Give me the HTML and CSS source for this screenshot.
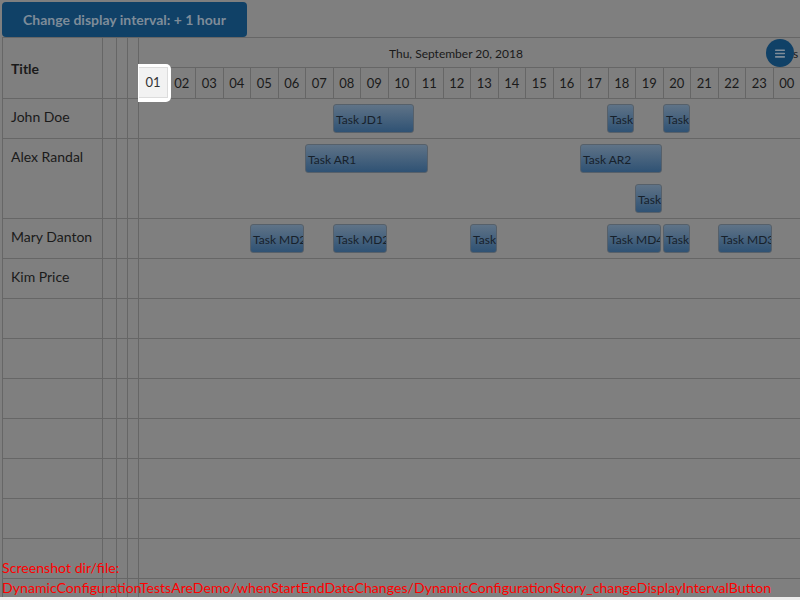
FILE: index.html
```html
<!DOCTYPE html>
<html>
<head>
<meta charset="utf-8">
<link rel="stylesheet" href="styles.css">
</head>
<body>
<button class="interval-btn">Change display interval: + 1 hour</button>
<div class="gantt">
  <div class="row header">
    <div class="cell c-title"><span class="title">Title</span></div>
    <div class="cell c-a"></div><div class="cell c-b"></div><div class="cell c-c"></div>
    <div class="tl tl-head">
      <div class="date-row"><span class="date">Thu, September 20, 2018</span><span class="date-tail">s</span></div>
      <div class="hour-row">
        <div class="hour">01</div><div class="hour">02</div><div class="hour">03</div><div class="hour">04</div>
        <div class="hour">05</div><div class="hour">06</div><div class="hour">07</div><div class="hour">08</div>
        <div class="hour">09</div><div class="hour">10</div><div class="hour">11</div><div class="hour">12</div>
        <div class="hour">13</div><div class="hour">14</div><div class="hour">15</div><div class="hour">16</div>
        <div class="hour">17</div><div class="hour">18</div><div class="hour">19</div><div class="hour">20</div>
        <div class="hour">21</div><div class="hour">22</div><div class="hour">23</div><div class="hour">00</div>
      </div>
    </div>
  </div>
  <div class="row">
    <div class="cell c-title">John Doe</div>
    <div class="cell c-a"></div><div class="cell c-b"></div><div class="cell c-c"></div>
    <div class="tl">
      <div class="bar" style="left:193.5px;width:81.5px">Task JD1</div>
      <div class="bar" style="left:467.5px;width:27px">Task</div>
      <div class="bar" style="left:523.5px;width:27px">Task</div>
    </div>
  </div>
  <div class="row tall">
    <div class="cell c-title">Alex Randal</div>
    <div class="cell c-a"></div><div class="cell c-b"></div><div class="cell c-c"></div>
    <div class="tl">
      <div class="bar" style="left:165.5px;width:123px">Task AR1</div>
      <div class="bar" style="left:440.5px;width:82px">Task AR2</div>
      <div class="bar lane2" style="left:495.5px;width:27px">Task</div>
    </div>
  </div>
  <div class="row">
    <div class="cell c-title">Mary Danton</div>
    <div class="cell c-a"></div><div class="cell c-b"></div><div class="cell c-c"></div>
    <div class="tl">
      <div class="bar" style="left:110.5px;width:54px">Task MD2</div>
      <div class="bar" style="left:193.5px;width:54px">Task MD2</div>
      <div class="bar" style="left:330.5px;width:27px">Task</div>
      <div class="bar" style="left:467.5px;width:54px">Task MD4</div>
      <div class="bar" style="left:523.5px;width:27px">Task</div>
      <div class="bar" style="left:578.5px;width:54px">Task MD3</div>
    </div>
  </div>
  <div class="row">
    <div class="cell c-title">Kim Price</div>
    <div class="cell c-a"></div><div class="cell c-b"></div><div class="cell c-c"></div>
    <div class="tl"></div>
  </div>
  <div class="row"><div class="cell c-title"></div><div class="cell c-a"></div><div class="cell c-b"></div><div class="cell c-c"></div><div class="tl"></div></div>
  <div class="row"><div class="cell c-title"></div><div class="cell c-a"></div><div class="cell c-b"></div><div class="cell c-c"></div><div class="tl"></div></div>
  <div class="row"><div class="cell c-title"></div><div class="cell c-a"></div><div class="cell c-b"></div><div class="cell c-c"></div><div class="tl"></div></div>
  <div class="row"><div class="cell c-title"></div><div class="cell c-a"></div><div class="cell c-b"></div><div class="cell c-c"></div><div class="tl"></div></div>
  <div class="row"><div class="cell c-title"></div><div class="cell c-a"></div><div class="cell c-b"></div><div class="cell c-c"></div><div class="tl"></div></div>
  <div class="row"><div class="cell c-title"></div><div class="cell c-a"></div><div class="cell c-b"></div><div class="cell c-c"></div><div class="tl"></div></div>
  <div class="row"><div class="cell c-title"></div><div class="cell c-a"></div><div class="cell c-b"></div><div class="cell c-c"></div><div class="tl"></div></div>
  <div class="row"><div class="cell c-title"></div><div class="cell c-a"></div><div class="cell c-b"></div><div class="cell c-c"></div><div class="tl"></div></div>

  <div class="spot"><div class="spot-cell">01</div></div>
  <button class="menu-btn">
    <svg width="28" height="28" viewBox="0 0 28 28">
      <path d="M9.7 11.2H18.3M9.7 14.5H18.3M9.7 17.9H18.3" stroke="#7e8c99" stroke-width="1.6" stroke-linecap="round" fill="none"/>
    </svg>
  </button>
</div>
<div class="bottom-strip"></div>
<div class="shot-label">Screenshot dir/file: DynamicConfigurationTestsAreDemo/whenStartEndDateChanges/DynamicConfigurationStory_changeDisplayIntervalButton</div>
</body>
</html>
```
FILE: styles.css
```css
html {
  background: #7f7f7f;
}
body {
  margin: 0;
  padding: 2px 0 0 2px;
  height: 600px;
  box-sizing: border-box;
  overflow: hidden;
  position: relative;
  font-family: Lato, "Noto Sans", sans-serif;
  color: #1a1a1a;
}
.interval-btn {
  display: block;
  width: 245px;
  height: 35px;
  padding: 0;
  border: 0;
  border-radius: 4px;
  background: #104167;
  color: #7e8c99;
  font-family: Lato, "Noto Sans", sans-serif;
  font-weight: bold;
  font-size: 14px;
}
.gantt {
  position: relative;
  width: 798px;
  height: 560px;
  box-sizing: border-box;
  border-top: 1px solid #666;
  border-left: 1px solid #666;
  overflow: hidden;
}
.row {
  display: flex;
  height: 40px;
  box-sizing: border-box;
  border-bottom: 1px solid #666;
}
.row.header {
  height: 61px;
}
.row.tall {
  height: 80px;
}
.cell {
  flex: none;
  box-sizing: border-box;
  border-right: 1px solid #666;
}
.c-title {
  width: 100px;
  padding-left: 8px;
  font-size: 14px;
  line-height: 36px;
  white-space: nowrap;
}
.header .c-title {
  display: flex;
  align-items: center;
  padding-top: 1px;
}
.title {
  font-weight: bold;
  line-height: 20px;
}
.c-a {
  width: 14px;
}
.c-b,
.c-c {
  width: 11px;
}
.tl {
  flex: 1;
  min-width: 0;
  position: relative;
}
.tl-head {
  display: flex;
  flex-direction: column;
}
.date-row {
  height: 30px;
  box-sizing: border-box;
  border-bottom: 1px solid #666;
  font-size: 12px;
  line-height: 30px;
  padding-top: 1px;
  position: relative;
  white-space: nowrap;
}
.date {
  margin-left: 250px;
}
.date-tail {
  position: absolute;
  left: 654px;
  top: 1px;
}
.hour-row {
  display: flex;
  height: 30px;
}
.hour {
  flex: 0 0 27.5px;
  box-sizing: border-box;
  border-left: 1px solid #666;
  text-align: center;
  font-size: 13px;
  line-height: 30px;
}
.hour:first-child {
  flex-basis: 28.5px;
  border-left: 0;
}
.bar {
  position: absolute;
  top: 5px;
  height: 29px;
  box-sizing: border-box;
  border: 1px solid #56606a;
  border-radius: 3px;
  background: linear-gradient(#5f7387, #2f5274);
  color: #17212b;
  font-size: 12px;
  line-height: 28px;
  padding: 1px 0 0 2.5px;
  overflow: hidden;
  white-space: nowrap;
}
.bar.lane2 {
  top: 45px;
}
.spot {
  position: absolute;
  left: 135px;
  top: 26px;
  width: 33px;
  height: 38px;
  background: #fff;
  border-radius: 0 5px 5px 0;
}
.spot-cell {
  margin: 3px 0 0 1px;
  width: 29px;
  height: 31px;
  box-sizing: border-box;
  border-top: 1px solid #dcdcdc;
  border-bottom: 1px solid #dcdcdc;
  border-right: 1px solid #dcdcdc;
  background: #f2f2f2;
  color: #333;
  text-align: center;
  font-size: 13px;
  line-height: 29px;
}
.menu-btn {
  position: absolute;
  left: 763px;
  top: 1px;
  width: 28px;
  height: 28px;
  padding: 0;
  border: 0;
  border-radius: 50%;
  background: #104167;
  display: flex;
}
.bottom-strip {
  height: 3px;
  margin-left: -2px;
  background: #ececec;
}
.shot-label {
  position: absolute;
  left: 2px;
  top: 558px;
  width: 796px;
  color: #ff0000;
  font-size: 14.15px;
  line-height: 20px;
}
```
